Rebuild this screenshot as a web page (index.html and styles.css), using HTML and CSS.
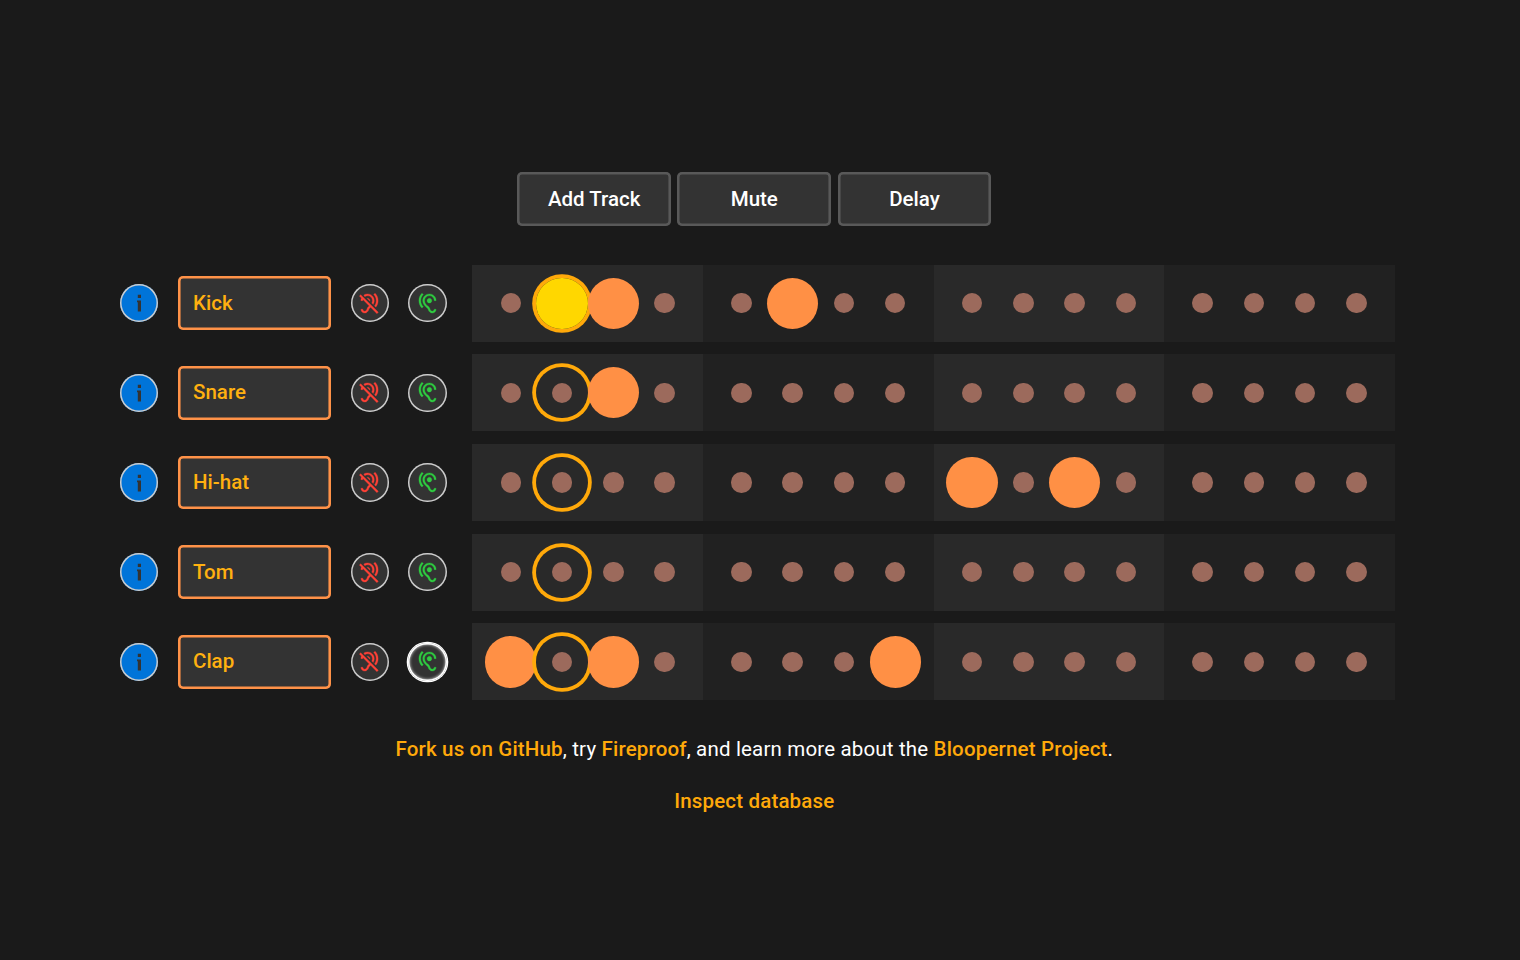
FILE: index.html
```html
<!DOCTYPE html>
<html lang="en">
<head>
<meta charset="utf-8">
<title>Bloopernet</title>
<link rel="stylesheet" href="styles.css">
</head>
<body>
<svg class="defs" aria-hidden="true">
  <symbol id="info" viewBox="0 0 18 18"><path d="M7.8 .8h3.2v3.3H7.8zM7 6.4h4v11.2H7.8V8.2H7z"/></symbol>
  <symbol id="muted" viewBox="0 0 24 24"><path d="M6.03 3.2C7.15 2.44 8.51 2 10 2c3.93 0 7 3.07 7 7 0 1.26-.38 2.65-1.07 3.9-.02.04-.05.08-.08.13l-1.48-1.48c.4-.86.63-1.75.63-2.55 0-2.8-2.2-5-5-5-1.08 0-2.08.34-2.91.92L6.03 3.2zm11.18 11.18l1.43 1.43C20.11 13.93 21 11.57 21 9c0-3.04-1.23-5.79-3.22-7.78l-1.42 1.42C17.99 4.26 19 6.51 19 9c0 2.02-.67 3.88-1.79 5.38zM10 6.5c-.21 0-.4.03-.59.08l3.01 3.01c.05-.19.08-.38.08-.59 0-1.38-1.12-2.5-2.5-2.5zM21.19 21.19L2.81 2.81 1.39 4.22l2.13 2.13C3.19 7.16 3 8.05 3 9h2c0-.36.05-.71.12-1.05l6.61 6.61c-.88.68-1.78 1.41-2.27 2.9-.5 1.5-1 2.01-1.71 2.38-.2.1-.46.16-.75.16-1.1 0-2-.9-2-2H3c0 2.21 1.79 4 4 4 .57 0 1.13-.12 1.64-.35 1.36-.71 2.13-1.73 2.73-3.55.32-.98.9-1.43 1.71-2.05.03-.02.05-.04.08-.06l6.62 6.62 1.41-1.42z"/></symbol>
  <symbol id="solo" viewBox="0 0 24 24"><path d="M17 20c-.29 0-.56-.06-.76-.15-.71-.37-1.21-.88-1.71-2.38-.51-1.56-1.47-2.29-2.39-3-.79-.61-1.61-1.24-2.32-2.53C9.29 10.98 9 9.93 9 9c0-2.8 2.2-5 5-5s5 2.2 5 5h2c0-3.93-3.07-7-7-7S7 5.07 7 9c0 1.26.38 2.65 1.07 3.9.91 1.65 1.98 2.48 2.85 3.15.81.62 1.39 1.07 1.71 2.05.6 1.82 1.37 2.84 2.73 3.55.51.23 1.07.35 1.64.35 2.21 0 4-1.79 4-4h-2c0 1.1-.9 2-2 2zM7.64 2.64L6.22 1.22C4.23 3.21 3 5.96 3 9s1.23 5.79 3.22 7.78l1.41-1.41C6.01 13.74 5 11.49 5 9s1.01-4.74 2.64-6.36zM11.5 9c0 1.38 1.12 2.5 2.5 2.5s2.5-1.12 2.5-2.5-1.12-2.5-2.5-2.5-2.5 1.12-2.5 2.5z"/></symbol>
</svg>
<main class="app">
  <nav class="toolbar">
    <button class="btn">Add Track</button>
    <button class="btn">Mute</button>
    <button class="btn">Delay</button>
  </nav>
  <section class="tracks" id="tracks"></section>
  <footer class="footer">
    <p class="line"><a class="link">Fork us on GitHub</a>, try <a class="link">Fireproof</a>, and learn more about the <a class="link">Bloopernet Project</a>.</p>
    <p class="line"><a class="link">Inspect database</a></p>
  </footer>
</main>
<script src="app.js"></script>
</body>
</html>
```
FILE: styles.css
```css
* { box-sizing: border-box; }
body {
  margin: 0;
  min-height: 960px;
  background: #1a1a1a;
  color: #fff;
  font-family: Roboto, sans-serif;
  font-size: 20.5px;
}
.defs { display: none; }
.app {
  width: 1508.6px;
  padding-top: 172.1px;
}
.toolbar {
  display: flex;
  justify-content: center;
  gap: 6.4px;
}
.btn {
  width: 153.75px;
  height: 54px;
  padding: 0;
  border: 0;
  border-radius: 5px;
  box-shadow: inset 0 0 0 2.56px #595959;
  background: #333;
  color: #fff;
  font: 500 20.5px Roboto, sans-serif;
}
.tracks {
  display: flex;
  flex-direction: column;
  gap: 12.8px;
  padding: 38.6px 0 0 120px;
}
.track {
  display: flex;
  align-items: center;
  gap: 19.2px;
  height: 76.9px;
}
.round {
  display: flex;
  align-items: center;
  justify-content: center;
  flex: none;
  width: 38.44px;
  height: 38.44px;
  padding: 0;
  border: 0;
  border-radius: 50%;
  box-shadow: inset 0 0 0 1.5px #ccc;
  background: #333;
}
.info { background: #0074d9; fill: #333; }
.muted { fill: #ff4136; stroke: #ff4136; stroke-width: 0.3px; }
.solo { fill: #2ecc40; stroke: #2ecc40; stroke-width: 0.3px; }
.round.active {
  box-shadow: 0 0 0 1.3px #fff, inset 0 0 0 1.4px #fff, inset 0 0 3px 1.6px #ddd;
}
.icon { width: 23px; height: 23px; }
.info .icon { width: 18px; height: 18px; }
.name {
  flex: none;
  width: 153.75px;
  height: 53.8px;
  padding: 0 15.4px 1px;
  border: 0;
  border-radius: 5px;
  box-shadow: inset 0 0 0 2.56px #ff9248;
  background: #333;
  color: #ffb010;
  font: 500 20.5px Roboto, sans-serif;
}
.grid { display: flex; margin-left: 6.6px; }
.beat {
  display: flex;
  align-items: center;
  width: 230.63px;
  height: 76.9px;
  padding: 0 12.8px;
  background: #292929;
}
.beat:nth-child(even) { background: #212121; }
.step {
  display: flex;
  align-items: center;
  justify-content: center;
  flex: none;
  width: 51.25px;
  height: 51.25px;
  border-radius: 50%;
}
.dot {
  width: 20.5px;
  height: 20.5px;
  border-radius: 50%;
  background: #9c6a5c;
}
.on .dot { width: 51.25px; height: 51.25px; background: #ff9045; }
.current { box-shadow: 0 0 0 3.8px #ffa90a; }
.current.on .dot { background: #ffd700; }
.footer { padding-top: 33.8px; text-align: center; }
.line { margin: 0 0 20.4px; line-height: 31px; letter-spacing: 0.17px; }
.link { color: #ffa90a; font-weight: 500; }
```
FILE: app.js
```js
const tracks = [
  { name: 'Kick', on: [1, 2, 5] },
  { name: 'Snare', on: [2] },
  { name: 'Hi-hat', on: [8, 10] },
  { name: 'Tom', on: [] },
  { name: 'Clap', on: [0, 2, 7], solo: true },
];
const current = 1;

const round = (kind, extra = '') =>
  `<button class="round ${kind} ${extra}" aria-label="${kind}"><svg class="icon"><use href="#${kind}"/></svg></button>`;

const step = (track, i) =>
  `<div class="step ${track.on.includes(i) ? 'on' : ''} ${i === current ? 'current' : ''}"><span class="dot"></span></div>`;

document.getElementById('tracks').innerHTML = tracks.map(t => `
  <div class="track">
    ${round('info')}
    <input class="name" value="${t.name}" aria-label="Track name">
    ${round('muted')}
    ${round('solo', t.solo ? 'active' : '')}
    <div class="grid">${[0, 1, 2, 3].map(b =>
      `<div class="beat">${[0, 1, 2, 3].map(s => step(t, b * 4 + s)).join('')}</div>`).join('')}</div>
  </div>`).join('');
```
